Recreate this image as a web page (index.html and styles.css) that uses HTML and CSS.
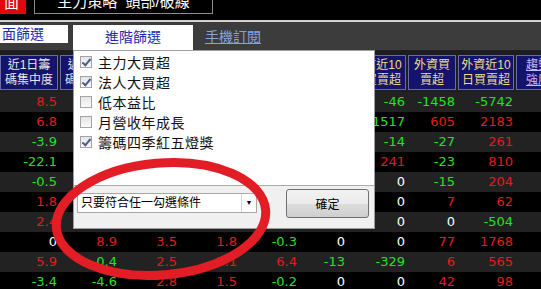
FILE: index.html
```html
<!DOCTYPE html>
<html lang="zh-Hant">
<head>
    <meta charset="UTF-8">
    <title>主力策略 頭部/破線</title>
    <link rel="stylesheet" href="styles.css">
</head>
<body>
    <div class="topbar">
        <div class="red-tab">面</div>
        <div class="title-box">主力策略&nbsp;&nbsp;頭部/破線</div>
    </div>

    <div class="tabbar">
        <div class="tab tab-basic">面篩選</div>
        <div class="tab tab-active">進階篩選</div>
        <a class="tab-link" href="#">手機訂閱</a>
    </div>

    <div class="table">
        <div class="row head">
            <div class="cell light">近1日籌<br>碼集中度</div>
            <div class="cell light">近5日籌<br>碼集中度</div>
            <div class="cell light">近10日籌<br>碼集中度</div>
            <div class="cell light">近20日籌<br>碼集中度</div>
            <div class="cell light">近60日籌<br>碼集中度</div>
            <div class="cell">投信<br>買賣超</div>
            <div class="cell">投信近10<br>日買賣超</div>
            <div class="cell">外資買<br>賣超</div>
            <div class="cell">外資近10<br>日買賣超</div>
            <div class="cell link"><a href="#">趨勢<br>強度</a></div>
        </div>

        <div class="row data odd">
            <div class="num up">8.5</div><div class="num up">2.1</div><div class="num up">1.4</div><div class="num up">0.9</div><div class="num down">-0.6</div><div class="num">0</div><div class="num down">-46</div><div class="num down">-1458</div><div class="num down">-5742</div><div class="num"></div>
        </div>
        <div class="row data">
            <div class="num up">6.8</div><div class="num up">3.2</div><div class="num up">2.0</div><div class="num up">1.1</div><div class="num up">0.4</div><div class="num">0</div><div class="num down">1517</div><div class="num up">605</div><div class="num up">2183</div><div class="num"></div>
        </div>
        <div class="row data odd">
            <div class="num down">-3.9</div><div class="num down">-1.2</div><div class="num up">0.8</div><div class="num up">0.5</div><div class="num down">-0.2</div><div class="num">0</div><div class="num down">-14</div><div class="num down">-27</div><div class="num up">261</div><div class="num"></div>
        </div>
        <div class="row data">
            <div class="num down">-22.1</div><div class="num down">-5.3</div><div class="num down">-2.4</div><div class="num up">1.0</div><div class="num up">0.7</div><div class="num">0</div><div class="num up">241</div><div class="num down">-23</div><div class="num up">810</div><div class="num"></div>
        </div>
        <div class="row data odd">
            <div class="num down">-0.5</div><div class="num up">1.6</div><div class="num up">0.9</div><div class="num up">0.3</div><div class="num up">0.1</div><div class="num">0</div><div class="num">0</div><div class="num down">-15</div><div class="num up">204</div><div class="num"></div>
        </div>
        <div class="row data">
            <div class="num up">1.8</div><div class="num up">2.2</div><div class="num up">1.3</div><div class="num up">0.6</div><div class="num up">0.2</div><div class="num">0</div><div class="num">0</div><div class="num up">7</div><div class="num up">62</div><div class="num"></div>
        </div>
        <div class="row data odd">
            <div class="num up">2.4</div><div class="num up">1.9</div><div class="num down">-0.7</div><div class="num up">0.4</div><div class="num up">0.3</div><div class="num">0</div><div class="num">0</div><div class="num">0</div><div class="num down">-504</div><div class="num"></div>
        </div>
        <div class="row data">
            <div class="num">0</div><div class="num up">8.9</div><div class="num up">3.5</div><div class="num up">1.8</div><div class="num down">-0.3</div><div class="num">0</div><div class="num">0</div><div class="num up">77</div><div class="num up">1768</div><div class="num"></div>
        </div>
        <div class="row data odd">
            <div class="num up">5.9</div><div class="num down">-0.4</div><div class="num up">2.5</div><div class="num up">3.1</div><div class="num up">6.4</div><div class="num down">-13</div><div class="num down">-329</div><div class="num up">6</div><div class="num up">565</div><div class="num"></div>
        </div>
        <div class="row data">
            <div class="num down">-3.4</div><div class="num down">-4.6</div><div class="num up">2.8</div><div class="num up">1.5</div><div class="num down">-0.2</div><div class="num">0</div><div class="num">0</div><div class="num up">42</div><div class="num up">98</div><div class="num"></div>
        </div>
    </div>

    <!-- 進階篩選 下拉面板 -->
    <div class="filter-pop">
        <div class="pop-list">
            <label class="opt"><span class="box on"></span>主力大買超</label>
            <label class="opt"><span class="box on"></span>法人大買超</label>
            <label class="opt"><span class="box"></span>低本益比</label>
            <label class="opt"><span class="box"></span>月營收年成長</label>
            <label class="opt"><span class="box on"></span>籌碼四季紅五燈獎</label>
        </div>
        <div class="pop-foot">
            <div class="combo">
                <span class="combo-text">只要符合任一勾選條件</span>
                <span class="combo-arrow">▼</span>
            </div>
            <button class="ok-btn">確定</button>
        </div>
    </div>

    <!-- 紅色圈選標記 -->
    <svg class="mark" width="541" height="289" viewBox="0 0 541 289">
        <ellipse cx="161" cy="219" rx="105" ry="56" transform="rotate(-5 161 219)" fill="none" stroke="#e31d25" stroke-width="9"/>
    </svg>
</body>
</html>
```

FILE: styles.css
```css
body {
    margin: 0;
    width: 541px;
    height: 289px;
    overflow: hidden;
    position: relative;
    background-color: #1e1e1e;
    font-family: "Liberation Sans", "Noto Sans CJK TC", sans-serif;
}

/* 上方標題列 */
.topbar {
    height: 20px;
    background-color: #000;
    display: flex;
    overflow: hidden;
}

.red-tab {
    width: 26px;
    height: 14px;
    box-sizing: border-box;
    padding: 0 0 4px 4px;
    background-color: #e1080c;
    color: #fff;
    font-size: 15px;
    line-height: 15px;
    display: flex;
    align-items: flex-end;
    overflow: hidden;
}

.title-box {
    margin-left: 8px;
    width: 179px;
    height: 14px;
    box-sizing: border-box;
    padding-bottom: 4px;
    border: 1px solid #8c8c8c;
    border-top: 0;
    color: #fff;
    font-size: 15px;
    line-height: 15px;
    display: flex;
    justify-content: center;
    align-items: flex-end;
    overflow: hidden;
    white-space: nowrap;
}

/* 分頁列 */
.tabbar {
    height: 28px;
    border-top: 2px solid #d2d2d2;
    background-color: #3c3c3c;
    display: flex;
    align-items: flex-start;
}

.tab {
    margin-top: 3px;
    background-color: #fff;
    color: #1b2aae;
    font-size: 14px;
}

.tab-basic {
    width: 68px;
    height: 18px;
    box-sizing: border-box;
    padding-left: 2px;
    line-height: 18px;
}

.tab-active {
    margin-left: 5px;
    width: 120px;
    height: 25px;
    line-height: 24px;
    text-align: center;
}

.tab-link {
    margin: 7px 0 0 12px;
    color: #88a2de;
    font-size: 14px;
    line-height: 17px;
}

/* 資料表 */
.table {
    padding-top: 5px;
}

.row {
    display: grid;
    grid-template-columns: 60px 60px 60px 60px 60px 48px 60px 50px 58px 46px;
}

.head {
    height: 35px;
    margin-bottom: 2px;
}

.head .cell {
    margin-right: 2px;
    box-sizing: border-box;
    border: 1px solid #6a6aa4;
    background-color: #14146c;
    color: #eedd8a;
    font-size: 12px;
    line-height: 15px;
    text-align: center;
    display: flex;
    align-items: center;
    justify-content: center;
    white-space: nowrap;
    overflow: hidden;
}

.head .cell.light {
    color: #e6e6e6;
}

.head .cell.link a {
    color: #c4baff;
}

.data {
    height: 20px;
    background-color: #000;
}

.data.odd {
    background-color: #222;
}

.num {
    padding-right: 3px;
    text-align: right;
    font-family: "DejaVu Sans", sans-serif;
    font-size: 13px;
    line-height: 20px;
    color: #fff;
}

.num.up {
    color: #e41b1b;
}

.num.down {
    color: #25e025;
}

/* 進階篩選面板 */
.filter-pop {
    position: absolute;
    left: 73px;
    top: 50px;
    width: 302px;
    height: 179px;
    box-sizing: border-box;
    border: 1px solid #9e9e9e;
    background-color: #f0f0f0;
}

.pop-list {
    height: 135px;
    box-sizing: border-box;
    padding: 1px 0 0 6px;
    background-color: #fff;
    border-bottom: 1px solid #ababab;
}

.opt {
    height: 20px;
    display: flex;
    align-items: center;
    gap: 6px;
    font-size: 14px;
    letter-spacing: 0.5px;
    color: #111;
}

.box {
    width: 12px;
    height: 12px;
    box-sizing: border-box;
    border: 1px solid #a4a4a4;
    background: linear-gradient(#e6e6e6, #fafafa);
    position: relative;
}

.box.on::after {
    content: "";
    position: absolute;
    left: 3px;
    top: 0px;
    width: 3px;
    height: 7px;
    border: solid #4b5d8f;
    border-width: 0 2px 2px 0;
    transform: rotate(40deg);
}

.pop-foot {
    height: 42px;
    display: flex;
    align-items: flex-start;
    padding-left: 3px;
}

.combo {
    margin-top: 7px;
    width: 180px;
    height: 20px;
    box-sizing: border-box;
    border: 1px solid #a7a7a7;
    background-color: #fff;
    display: flex;
}

.combo-text {
    flex: 1;
    padding-left: 3px;
    font-size: 12px;
    line-height: 18px;
    color: #000;
}

.combo-arrow {
    width: 14px;
    border-left: 1px solid #d4d4d4;
    font-size: 7px;
    line-height: 18px;
    text-align: center;
    color: #000;
}

.ok-btn {
    margin: 3px 0 0 29px;
    width: 83px;
    height: 29px;
    border: 1px solid #707070;
    border-radius: 3px;
    background: linear-gradient(#f2f2f2 0%, #ebebeb 50%, #dddddd 51%, #cfcfcf 100%);
    font-family: "Liberation Sans", "Noto Sans CJK TC", sans-serif;
    font-size: 12px;
    color: #000;
    padding: 0;
}

.mark {
    position: absolute;
    left: 0;
    top: 0;
    pointer-events: none;
}
```
